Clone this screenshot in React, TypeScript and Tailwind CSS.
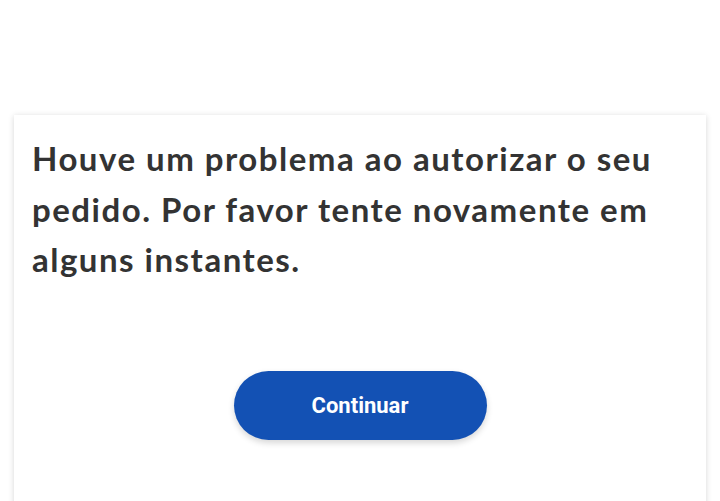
export default function App() {
  return (
    <div className="min-h-[501px] bg-white pt-[115px] px-[14px] overflow-hidden h-[501px]">
      <div className="bg-white h-[420px] shadow-[0_1px_6px_rgba(0,0,0,0.16)] px-[18px] pt-[18px]">
        <p
          className="text-[33px] leading-[50.5px] font-bold text-[#333333] tracking-[1.5px]"
          style={{ fontFamily: "Lato, 'Noto Sans', sans-serif" }}
        >
          Houve um problema ao autorizar o seu pedido. Por favor tente novamente em alguns instantes.
        </p>
        <div className="flex justify-center mt-[86px]">
          <button
            className="w-[253px] h-[69px] rounded-full bg-[#1351b4] text-white text-[22px] font-bold shadow-[0_3px_6px_rgba(0,0,0,0.16)]"
            style={{ fontFamily: "Roboto, sans-serif" }}
          >
            Continuar
          </button>
        </div>
      </div>
    </div>
  );
}
